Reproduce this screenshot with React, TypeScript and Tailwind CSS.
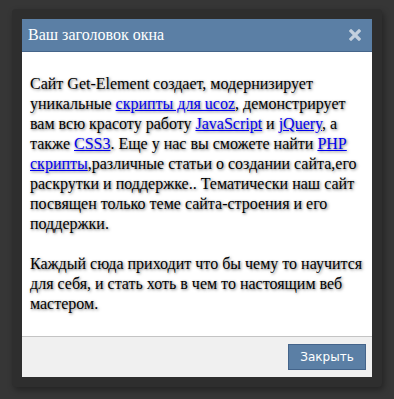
import React from 'react';

const serif = { fontFamily: '"Liberation Serif", "Times New Roman", serif' };

const Link: React.FC<{ children: React.ReactNode }> = ({ children }) => (
  <a href="#" className="text-[#0000ee] underline">
    {children}
  </a>
);

const App: React.FC = () => {
  return (
    <div className="w-[394px] h-[399px] bg-[#363636] pt-[9px] pl-[12px]">
      <div className="w-[370px] h-[378px] p-[10px] bg-[#2e2e2e] rounded-[4px] shadow-[2px_3px_6px_rgba(0,0,0,0.35)]">
        <div className="flex flex-col h-[358px] bg-white">
          <div
            className="flex items-center justify-between h-[33px] pl-[6px] pr-[11px] bg-[#5b7fa5] border-b border-[#45658a] text-white text-[16px]"
            style={serif}
          >
            <span>Ваш заголовок окна</span>
            <svg width="12" height="12" viewBox="0 0 12 12">
              <path d="M2 2 L10 10 M10 2 L2 10" stroke="#c3d0de" strokeWidth="3.2" strokeLinecap="square" />
            </svg>
          </div>
          <div
            className="flex-1 pt-[22px] px-[8px] text-[16px] leading-[20px] text-black [text-shadow:1px_1px_3px_rgba(0,0,0,0.55)]"
            style={serif}
          >
            <p>
              Сайт Get-Element создает, модернизирует уникальные <Link>скрипты для ucoz</Link>, демонстрирует вам
              всю красоту работу <Link>JavaScript</Link> и <Link>jQuery</Link>, а также <Link>CSS3</Link>. Еще у нас
              вы сможете найти <Link>PHP скрипты</Link>,различные статьи о создании сайта,его раскрутки и
              поддержке.. Тематически наш сайт посвящен только теме сайта-строения и его поддержки.
            </p>
            <p className="mt-[20px]">
              Каждый сюда приходит что бы чему то научится для себя, и стать хоть в чем то настоящим веб мастером.
            </p>
          </div>
          <div className="flex justify-end items-center h-[41px] pr-[6px] bg-[#f0f0f0] border-t border-[#c4c4c4]">
            <button
              className="w-[78px] h-[26px] bg-[#5b7fa5] border border-[#44648a] text-white text-[12px]"
              style={{ fontFamily: '"DejaVu Sans", Tahoma, sans-serif' }}
            >
              Закрыть
            </button>
          </div>
        </div>
      </div>
    </div>
  );
};

export default App;
